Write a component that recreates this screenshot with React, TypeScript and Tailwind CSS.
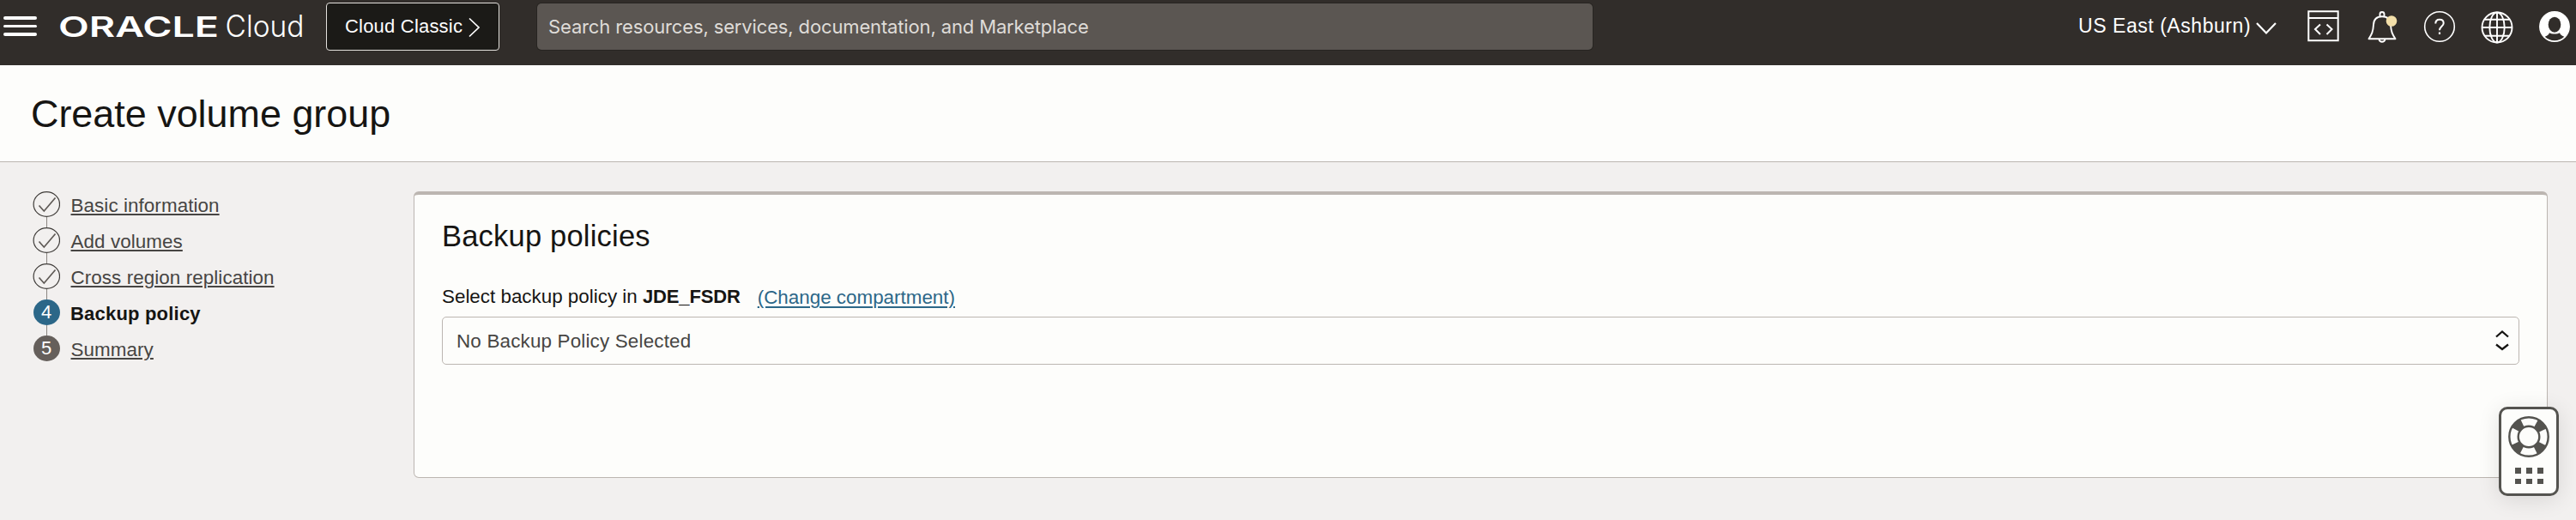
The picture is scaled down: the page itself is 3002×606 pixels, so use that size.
import React from "react";

function Logo() {
  return (
    <svg width="290" height="64" viewBox="0 0 290 64" fill="#fff" className="ml-[25px] shrink-0 overflow-visible" aria-label="Oracle Cloud">
      <text x="0" y="43" fontFamily="Inter, sans-serif" fontWeight="600" fontSize="33" textLength="187" lengthAdjust="spacingAndGlyphs">
        ORACLE
      </text>
      <text x="194.500" y="43" fontFamily="Inter, sans-serif" fontWeight="300" fontSize="35" textLength="92" lengthAdjust="spacingAndGlyphs">
        Cloud
      </text>
    </svg>
  );
}

function Header() {
  return (
    <header className="flex h-[76px] items-start bg-[#312d2a] text-white">
      <div className="ml-1 mt-[19px] flex w-[39px] shrink-0 flex-col gap-1.5">
        <span className="h-[3.5px] rounded-full bg-white" />
        <span className="h-[3.5px] rounded-full bg-white" />
        <span className="h-[3.5px] rounded-full bg-white" />
      </div>
      <Logo />
      <button className="ml-[22px] mt-[3px] flex h-14 w-[202px] shrink-0 items-start rounded-[4px] border border-[#e4e1dd] bg-[#1b1a17] pl-[21px]">
        <span className="mt-[13px] whitespace-nowrap text-[22px] leading-7 tracking-[0.2px]">Cloud Classic</span>
        <svg width="14" height="24" viewBox="0 0 14 24" className="ml-[7px] mt-4" fill="none" stroke="#fff" strokeWidth="1.7">
          <path d="M1 1.5 12 12 1 22.5" />
        </svg>
      </button>
      <div className="ml-[44px] mt-1 h-[54px] w-[1230px] shrink-0 rounded-[5px] bg-[#5b5652] pl-[13px] pt-[13px] font-['Inter'] text-[22px] leading-7 tracking-[-0.14px] text-[#dfdcd8] shadow-[0_0_0_1px_#272421]">
        Search resources, services, documentation, and Marketplace
      </div>
      <div className="ml-[566px] mt-4 w-[206px] shrink-0 whitespace-nowrap text-[23px] leading-7 tracking-[0.55px]">US East (Ashburn)</div>
      <svg width="24" height="16" viewBox="0 0 24 16" className="ml-px mt-[25px] shrink-0" fill="none" stroke="#fff" strokeWidth="2.2">
        <path d="M1 2 12 13.5 23 2" />
      </svg>
      <svg width="38" height="38" viewBox="0 0 38 38" className="ml-[36px] mt-[11px] shrink-0" fill="none" stroke="#fff" strokeWidth="2">
        <path d="M1.300 2.300H35.700V36.300H1.300ZM1.300 10H35.700" />
        <path d="M15 17.500 9 23 15 29M22.500 17.500 28.500 23 22.500 29" />
      </svg>
      <svg width="38" height="40" viewBox="0 0 38 40" className="ml-[32px] mt-[12px] shrink-0" fill="none" stroke="#fff" strokeWidth="1.900" strokeLinejoin="round">
        <path d="M14.500 7V4.500a2.500 2.500 0 0 1 5 0V7M1.500 33.200H32.500C29 28 27.500 25 27 17C26.800 10.500 23 7.300 17 7.300S7.200 10.500 7 17C6.500 25 5 28 1.500 33.200Z" />
        <path d="M13.500 34a3.600 3.600 0 0 0 7 0" />
        <circle cx="28" cy="12.500" r="6.300" fill="#f3dfa9" stroke="none" />
      </svg>
      <svg width="38" height="38" viewBox="0 0 38 38" className="ml-[27px] mt-[12px] shrink-0" fill="none" stroke="#fff">
        <circle cx="19" cy="19" r="17.300" strokeWidth="1.600" />
        <path d="M14.300 15.500c0-3.200 2-4.800 4.700-4.800s4.700 1.600 4.700 4.300c0 3.500-4.700 4.200-4.700 8.200" strokeWidth="2" />
        <path d="M19 25.500v2.500" strokeWidth="2.200" />
      </svg>
      <svg width="38" height="38" viewBox="0 0 38 38" className="ml-[29px] mt-[13px] shrink-0" fill="none" stroke="#fff" strokeWidth="1.900">
        <circle cx="19" cy="19" r="17.500" />
        <ellipse cx="19" cy="19" rx="8.700" ry="17.500" />
        <path d="M19 1.500V36.500M1.500 19H36.500M4.500 9.700H33.500M4.500 28.700H33.500" />
      </svg>
      <svg width="38" height="38" viewBox="0 0 38 38" className="ml-[29px] mt-[12px] shrink-0">
        <circle cx="19" cy="19" r="17.300" fill="#fff" stroke="#fff" strokeWidth="1.200" />
        <ellipse cx="19" cy="16.700" rx="7.300" ry="9" fill="#312d2a" />
        <path d="M13 26.300C15 28 23 28 25 26.300C25.500 28.500 28 30 30.300 30.800A16.600 16.600 0 0 1 7.700 30.800C10 30 12.500 28.500 13 26.300Z" fill="#312d2a" />
      </svg>
    </header>
  );
}

type StepState = "done" | "current" | "todo";

const steps: { label: string; state: StepState }[] = [
  { label: "Basic information", state: "done" },
  { label: "Add volumes", state: "done" },
  { label: "Cross region replication", state: "done" },
  { label: "Backup policy", state: "current" },
  { label: "Summary", state: "todo" },
];

function StepBadge({ state, index }: { state: StepState; index: number }) {
  if (state === "done") {
    return (
      <svg width="32" height="30" viewBox="0 0 32 30" fill="none" className="block">
        <ellipse cx="16.300" cy="15" rx="15.200" ry="14.400" stroke="#3f3c39" strokeWidth="1.200" />
        <path d="M7.500 16.500 13.300 23 26.500 7.500" stroke="#5f5a56" strokeWidth="1.700" />
      </svg>
    );
  }
  return (
    <span
      className={
        state === "current"
          ? "flex h-[30px] w-[31px] items-center justify-center rounded-[50%] bg-[#2c6788] text-[22px] leading-none text-white"
          : "flex h-[30px] w-[31px] items-center justify-center rounded-[50%] bg-[#655f5b] text-[22px] leading-none text-white"
      }
    >
      {index + 1}
    </span>
  );
}

function Steps() {
  return (
    <ol className="w-[482px] shrink-0 pl-[38px] pt-[34px]">
      {steps.map((step, i) => (
        <li key={step.label} className="flex h-[42px] items-start">
          <div className="flex h-[42px] w-8 flex-col items-center">
            <StepBadge state={step.state} index={i} />
            {i < steps.length - 1 && <span className="h-3 w-px bg-[#8b8681]" />}
          </div>
          <span
            className={
              step.state === "current"
                ? "ml-[12px] mt-[3px] whitespace-nowrap text-[22px] font-bold leading-7 tracking-[0.2px] text-[#161513]"
                : "ml-[12.500px] mt-[3px] whitespace-nowrap text-[22.400px] leading-7 tracking-[0.080px] text-[#474543] underline decoration-[1.500px] underline-offset-[2px]"
            }
          >
            {step.label}
          </span>
        </li>
      ))}
    </ol>
  );
}

function PolicyCard() {
  return (
    <section className="mt-[34px] h-[334px] w-[2487px] shrink-0 rounded-[6px] border border-t-4 border-[#bcb6b1] bg-[#fdfdfb] px-8">
      <h2 className="mt-[27px] whitespace-nowrap text-[34.500px] leading-[42px] tracking-[0.200px] text-[#161513]">Backup policies</h2>
      <div className="mt-[36px] flex h-7 items-start whitespace-nowrap text-[22.400px] leading-7 text-[#161513]">
        <span className="whitespace-pre">Select backup policy in </span>
        <b className="text-[22px] tracking-[-0.150px]">JDE_FSDR</b>
        <a className="ml-5 mt-px text-[#2c6788] underline decoration-2 underline-offset-[3px]">(Change compartment)</a>
      </div>
      <div className="mt-[9px] flex h-14 w-[2421px] items-start justify-between rounded-[5px] border border-[#bcb6b1] pl-4 pr-[10px]">
        <span className="mt-[14px] text-[22.400px] leading-7 tracking-[0.180px] text-[#474543]">No Backup Policy Selected</span>
        <svg width="18" height="26" viewBox="0 0 18 26" className="mt-[14px]" fill="none" stroke="#161513" strokeWidth="2.300">
          <path d="M2 8.500 9 2.500 16 8.500M2 17.500 9 23 16 17.500" />
        </svg>
      </div>
    </section>
  );
}

function HelpWidget() {
  return (
    <div className="absolute left-[2912px] top-[474px] flex h-[104px] w-[70px] flex-col items-center rounded-[10px] border-[3px] border-[#54534f] bg-[#fdfdfb] pt-2 shadow-[0_4px_26px_rgba(0,0,0,0.11)]">
      <svg width="48" height="48" viewBox="0 0 48 48" fill="none" stroke="#54534f">
        <circle cx="24" cy="24" r="17.500" strokeWidth="10" strokeDasharray="11 16.489" strokeDashoffset="-8.244" />
        <circle cx="24" cy="24" r="22.700" strokeWidth="2.400" />
        <circle cx="24" cy="24" r="12.300" strokeWidth="2.400" />
      </svg>
      <div className="mt-3 grid grid-cols-3 gap-x-[6px] gap-y-[6px]">
        {[0, 1, 2, 3, 4, 5].map((i) => (
          <span key={i} className="h-[6.500px] w-[7px] bg-[#54534f]" />
        ))}
      </div>
    </div>
  );
}

export default function App() {
  return (
    <div className="relative h-[606px] w-[3002px] overflow-hidden bg-[#f2f0ef] font-['Liberation_Sans',Arial,sans-serif]">
      <Header />
      <div className="h-[113px] border-b border-[#bcb6b1] bg-[#fdfdfb] pl-[36px] pt-[31px]">
        <h1 className="text-[44.900px] leading-[52px] text-[#161513]">Create volume group</h1>
      </div>
      <main className="flex items-start">
        <Steps />
        <PolicyCard />
      </main>
      <HelpWidget />
    </div>
  );
}
